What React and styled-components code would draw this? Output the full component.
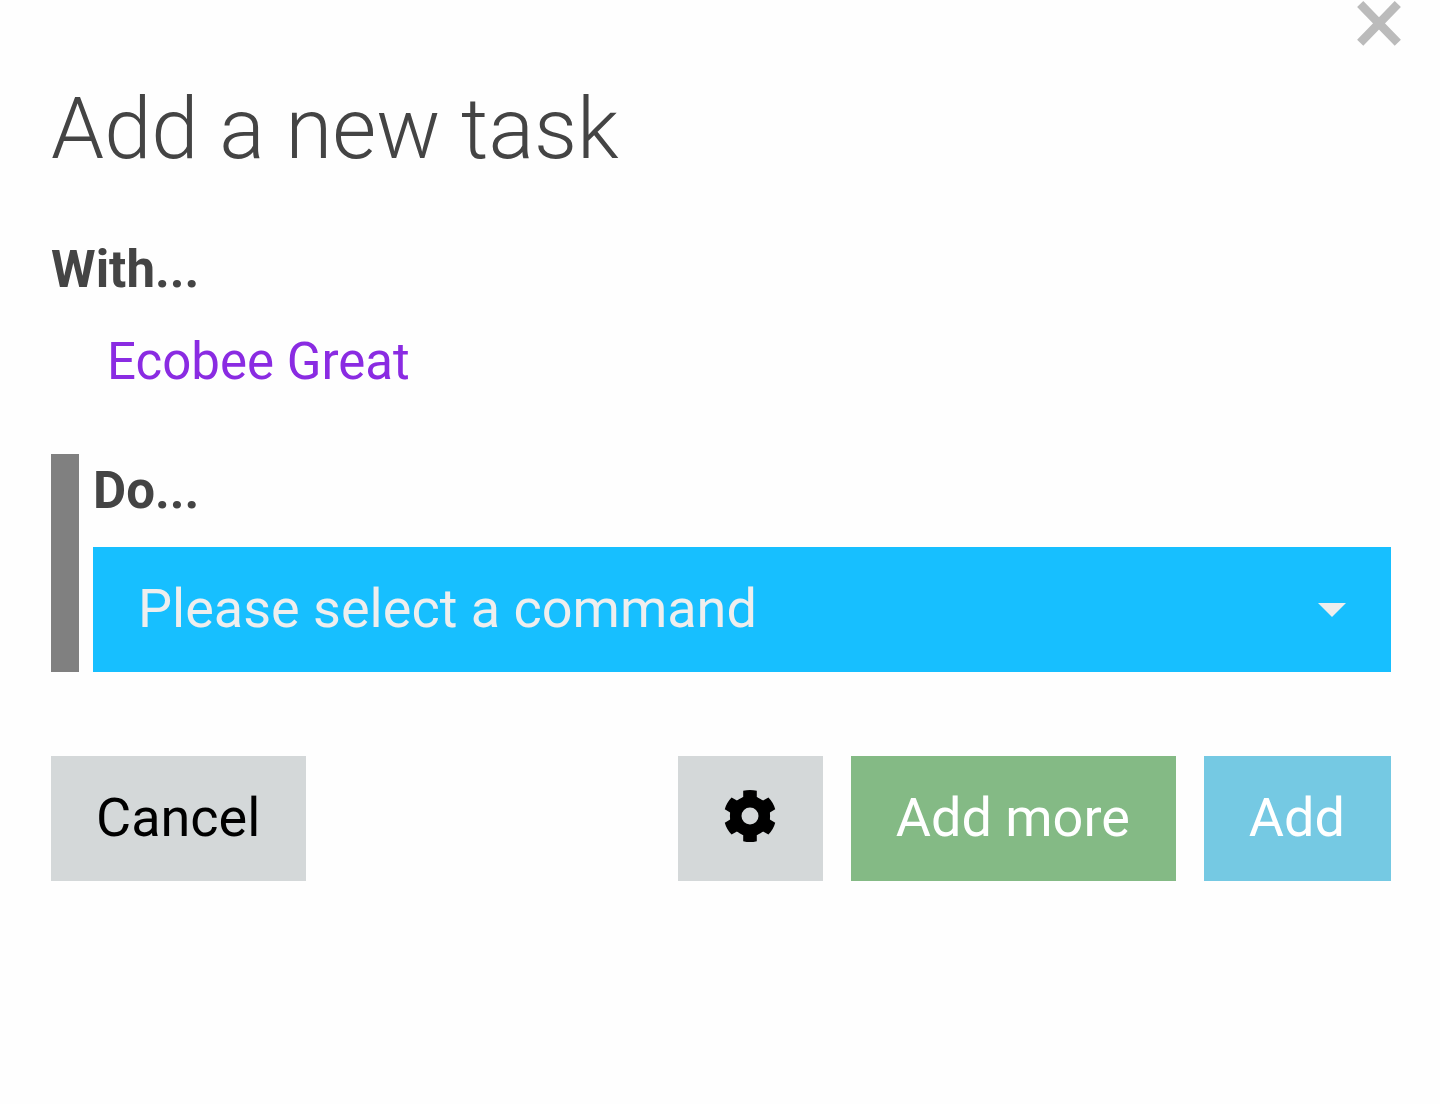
import { useState } from 'react'
import styled, { createGlobalStyle } from 'styled-components'

const GlobalStyle = createGlobalStyle`
    *, *::before, *::after {
        box-sizing: border-box;
    }

    body {
        margin: 0;
        background: #fefefe;
        color: #444;
        font-family: Roboto, "Noto Sans", sans-serif;
    }
`

const TopBar = styled.header`
    display: flex;
    justify-content: flex-end;
    padding: 0 38px;
`

const CloseButton = styled.button`
    display: flex;
    padding: 0;
    border: 0;
    background: none;
    color: #bbb;
    cursor: pointer;
`

const Dialog = styled.form`
    display: flex;
    flex-direction: column;
    padding: 28px 49px 56px 51px;
`

const Title = styled.h1`
    margin: 0;
    font-size: 85px;
    font-weight: 300;
    line-height: 110px;
`

const Section = styled.section`
    margin-top: 48px;
`

const SectionTitle = styled.h2`
    margin: 0;
    font-size: 51px;
    font-weight: 700;
    line-height: 76px;
`

const Device = styled.p`
    margin: 0;
    padding: 16px 56px;
    color: #8a2be2;
    font-size: 51px;
    line-height: 76px;
`

const CommandSection = styled(Section)`
    margin-top: 38px;
    padding-left: 14px;
    border-left: 28px solid #808080;
`

const CommandTitle = styled.label`
    display: block;
    padding-bottom: 19px;
    font-size: 51px;
    font-weight: 700;
    line-height: 74px;
`

const SelectBox = styled.div`
    position: relative;

    svg {
        position: absolute;
        top: 56px;
        right: 45px;
        pointer-events: none;
    }
`

const Select = styled.select`
    display: block;
    width: 100%;
    height: 125px;
    padding: 0 45px 2px;
    border: 0;
    border-radius: 0;
    appearance: none;
    background: #17bfff;
    color: #eee;
    font-family: inherit;
    font-size: 54px;
`

const Actions = styled.div`
    display: flex;
    gap: 28px;
    margin-top: 84px;
`

const Button = styled.button`
    display: flex;
    align-items: center;
    justify-content: center;
    height: 125px;
    padding: 0 46px 2px 45px;
    border: 0;
    background: ${p => p.$background || '#d4d8d9'};
    color: ${p => p.$color || '#000'};
    font-family: inherit;
    font-size: 54px;
    cursor: pointer;
`

const CancelButton = styled(Button)`
    margin-right: auto;
`

const CloseIcon = () => (
    <svg width="46" height="46" viewBox="0 0 46 46" aria-hidden="true">
        <path d="M4.2 4L41.8 42.7M41.8 4L4.2 42.7" stroke="currentColor" strokeWidth="8.6" />
    </svg>
)

const ArrowIcon = () => (
    <svg width="28" height="14" viewBox="0 0 28 14" aria-hidden="true">
        <path d="M0 0H28L14 14Z" fill="#eee" />
    </svg>
)

const GearIcon = () => (
    <svg width="54" height="57" viewBox="-27 -27 54 57" aria-hidden="true">
        <circle r="14.3" fill="none" stroke="currentColor" strokeWidth="11.6" />
        {[0, 60, 120, 180, 240, 300].map(angle => (
            <path
                key={angle}
                d="M-9 -17L-6.8 -19V-25.2Q0 -27 6.8 -25.2V-19L9 -17Z"
                fill="currentColor"
                transform={`rotate(${angle})`}
            />
        ))}
    </svg>
)

export default function App() {
    const [command, setCommand] = useState('')

    return (
        <>
            <GlobalStyle />
            <TopBar>
                <CloseButton type="button" aria-label="Close">
                    <CloseIcon />
                </CloseButton>
            </TopBar>
            <Dialog onSubmit={e => e.preventDefault()}>
                <Title>Add a new task</Title>
                <Section>
                    <SectionTitle>With...</SectionTitle>
                    <Device>Ecobee Great</Device>
                </Section>
                <CommandSection>
                    <CommandTitle htmlFor="command">Do...</CommandTitle>
                    <SelectBox>
                        <Select id="command" value={command} onChange={e => setCommand(e.target.value)}>
                            <option value="">Please select a command</option>
                        </Select>
                        <ArrowIcon />
                    </SelectBox>
                </CommandSection>
                <Actions>
                    <CancelButton type="button">Cancel</CancelButton>
                    <Button type="button" aria-label="Settings">
                        <GearIcon />
                    </Button>
                    <Button type="button" $background="#84ba85" $color="#fff">Add more</Button>
                    <Button type="submit" $background="#75c9e3" $color="#fff">Add</Button>
                </Actions>
            </Dialog>
        </>
    )
}
